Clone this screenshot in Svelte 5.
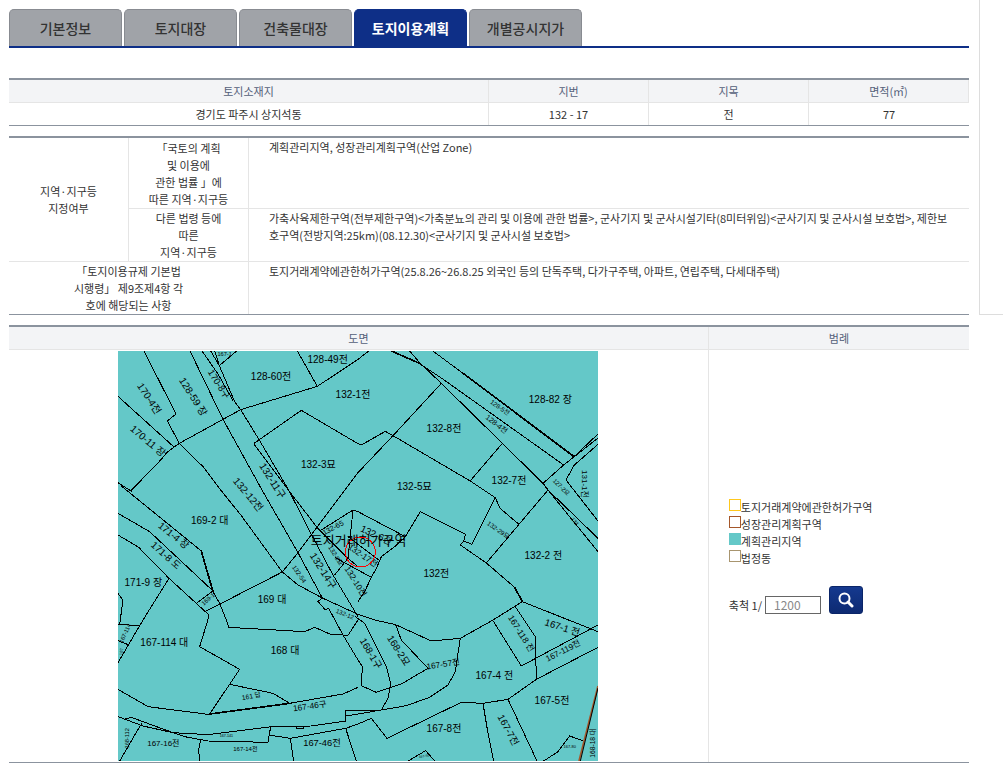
<script>
  const tabs = ['기본정보', '토지대장', '건축물대장', '토지이용계획', '개별공시지가'];
  let active = $state(3);
  let scale = $state('1200');

  const legend = [
    { kind: 'permit', label: '토지거래계약에관한허가구역' },
    { kind: 'growth', label: '성장관리계획구역' },
    { kind: 'managed', label: '계획관리지역' },
    { kind: 'district', label: '법정동' }
  ];

  // Parcel boundaries, three units to the screen pixel.
  const boundaries = [
    '78,3 174,192 148,213 184,280', '0,139 168,291', '0,398 42,425',
    '55,405 38,423 130,328 148,306 184,280 315,208 368,179 598,109 720,28 752,3',
    '184,280 255,350 308,420 370,497 493,666', '216,3 315,208 432,420 540,608 613,744',
    '252,3 300,72 345,152', '278,3 304,47 350,155 368,179', '290,3 304,47 356,3',
    '368,179 425,272 512,420 580,553 645,675 720,800', '538,3 598,109',
    '407,281 505,412 597,532 690,625 720,650',
    '407,281 550,181 720,281 732,284 802,244 825,257 1055,392 1132,443 1146,475 1203,523',
    '970,100 825,257 720,368 597,532 540,608 493,666 265,783',
    '820,3 900,38 970,84 1337,345', '875,3 905,38 970,100 1153,280 1275,400 1290,420',
    '945,3 1368,320 1440,252', '1275,400 1337,345 1440,264', '1440,283 1368,346 1344,390 1440,513',
    '1153,280 1057,392', '1132,443 1062,583 1037,573 1042,553 907,485 862,560',
    '862,560 830,590 790,620 785,632 775,655 760,682 740,725 720,755',
    '1037,573 1027,585 1105,639 1203,523 1290,420 1440,605', '1290,420 1440,565',
    '1105,639 1190,712 1213,755 1440,845',
    '1213,755 1125,810 1027,865 940,873 833,824 770,810 720,793 613,744 540,705 493,666',
    '1190,767 1252,860 1255,988', '1125,812 1210,948 1440,825',
    '1440,892 1255,988 1170,1048 1095,1060 1030,1057 807,1165 760,1105 720,1122 683,1135 517,1165 453,1155',
    '1095,1060 1110,1150 1127,1233', '1170,1048 1257,1233',
    '1027,865 1020,910 1012,965 990,1005 935,1042 865,1067 790,1080 720,1083',
    '833,824 850,870 930,955 850,1002 775,1027 730,1007 733,950 720,930 675,855 632,775 622,780 600,754 613,744',
    '712,800 740,820 750,840 805,950 818,1000 810,1045 790,1080 720,1092 683,1098',
    '10,408 250,603 285,725 305,760 325,810 332,832 560,845 590,832 635,852 690,856 720,810',
    '0,490 95,545 285,723 235,760', '0,555 62,592 153,685 273,795 268,815 245,890 365,958 275,1092',
    '153,685 75,810 0,938', '0,730 15,750 5,823', '0,823 65,827', '0,872 33,885',
    '0,1018 90,1070 270,1093 515,1060 675,1032 720,1012', '335,1003 465,1030 515,1060',
    '0,1100 75,1128 165,1148 270,1154 460,1130 580,1128 683,1113 683,1082 720,1082',
    '20,1107 40,1102 75,1115 165,1148 200,1160 270,1173 450,1177 458,1130',
    '683,1135 715,1233', '517,1165 527,1233', '248,1170 242,1200 245,1233', '72,1120 65,1130 5,1233',
    '535,1128 535,1135 557,1135 557,1128', '870,1233 923,1202 950,1233',
    '1277,1233 1320,1205 1355,1158 1395,1172', '610,540 705,480 720,485 862,560',
    '705,480 690,625', '690,625 650,675', '690,560 785,632', '650,622 760,682'
  ];
  const heavy = ['820,3 900,38', '1030,66 1368,320', '275,1092 515,1060', '1190,712 1213,755', '250,603 285,725'];

  // [text, centre x, centre y, angle, size]
  const labels = [
    ['128-49전', 629, 28, 0, 30], ['128-60전', 459, 78, 0, 30], ['132-1전', 705, 133, 0, 30],
    ['128-82 장', 1297, 149, 0, 30], ['132-8전', 978, 235, 0, 30], ['132-3묘', 601, 344, 0, 30],
    ['132-7전', 1173, 390, 0, 30], ['132-5묘', 889, 409, 0, 30], ['169-2 대', 275, 511, 0, 30],
    ['171-9 장', 76, 698, 0, 30], ['169 대', 462, 748, 0, 30], ['132전', 955, 670, 0, 30],
    ['132-2 전', 1276, 616, 0, 30], ['167-114 대', 139, 878, 0, 30], ['168 대', 501, 902, 0, 30],
    ['167-4 전', 1129, 975, 0, 30], ['167-5전', 1302, 1050, 0, 30], ['167-8전', 978, 1134, 0, 30],
    ['167-46전', 612, 1178, 0, 28], ['167-16전', 136, 1178, 0, 24], ['167-14전', 382, 1195, 0, 18],
    ['167-46구', 575, 1068, -8, 25], ['161 답', 400, 1038, -10, 20], ['167-57전', 975, 942, -9, 25],
    ['170-4전', 94, 145, 57, 30], ['128-59 장', 226, 140, 58, 30], ['170-8구', 303, 102, 58, 28],
    ['170-11 장', 90, 272, 40, 30], ['132-12전', 391, 433, 50, 30], ['132-11구', 464, 392, 58, 30],
    ['171-4 장', 167, 556, 39, 29], ['171-8 도', 144, 616, 42, 29], ['132-14구', 616, 662, 58, 30],
    ['132-54', 544, 672, 55, 19], ['132-8묘', 653, 616, 58, 19], ['132-65', 645, 533, -28, 22],
    ['132-6전', 775, 555, 25, 29], ['132-17전', 735, 616, 35, 25], ['132-10전', 713, 694, 58, 25],
    ['132-12', 681, 792, 22, 18], ['168-1구', 759, 910, 60, 29], ['168-2묘', 842, 901, 58, 29],
    ['128-5전', 1146, 172, 35, 19], ['128-4전', 1136, 222, 38, 22], ['131-1전', 1400, 402, 90, 24],
    ['127-2묘', 1330, 411, 45, 18], ['132-29묘', 1141, 540, 35, 19], ['132', 1371, 514, 50, 15],
    ['167-118 전', 1210, 850, 58, 26], ['167-1 전', 1333, 832, 18, 29], ['167-119전', 1335, 902, -27, 25],
    ['167-7전', 1171, 1140, 62, 29], ['169-1', 270, 747, -42, 18], ['167-114', 21, 850, -65, 17],
    ['168-112', 27, 1165, -90, 17], ['167-141', 325, 1157, 0, 11], ['167-50', 918, 1218, -8, 10],
    ['167-80', 1355, 1191, 0, 12], ['168-18 대', 1423, 1180, -90, 20], ['167-1', 320, 12, 0, 17],
    ['167', 10, 905, -82, 13]
  ];
</script>

<div class="page">
  <main>
    <nav aria-label="토지정보">
      {#each tabs as tab, i}
        <button type="button" class="tab" class:active={active === i} onclick={() => (active = i)}>{tab}</button>
      {/each}
    </nav>

    <table class="parcel">
      <colgroup><col class="half" /><col /><col /><col /></colgroup>
      <thead>
        <tr><th>토지소재지</th><th>지번</th><th>지목</th><th>면적(㎡)</th></tr>
      </thead>
      <tbody>
        <tr><td>경기도 파주시 상지석동</td><td>132 - 17</td><td>전</td><td>77</td></tr>
      </tbody>
    </table>

    <table class="zoning">
      <colgroup><col class="narrow" /><col class="narrow" /><col /></colgroup>
      <tbody>
        <tr>
          <th rowspan="2">지역·지구등<br />지정여부</th>
          <th>「국토의 계획<br />및 이용에<br />관한 법률 」에<br />따른 지역·지구등</th>
          <td>계획관리지역, 성장관리계획구역(산업 Zone)</td>
        </tr>
        <tr>
          <th>다른 법령 등에<br />따른<br />지역·지구등</th>
          <td>가축사육제한구역(전부제한구역)&lt;가축분뇨의 관리 및 이용에 관한 법률&gt;, 군사기지 및 군사시설기타(8미터위임)&lt;군사기지 및 군사시설 보호법&gt;, 제한보호구역(전방지역:25km)(08.12.30)&lt;군사기지 및 군사시설 보호법&gt;</td>
        </tr>
        <tr>
          <th colspan="2">「토지이용규제 기본법<br />시행령」 제9조제4항 각<br />호에 해당되는 사항</th>
          <td>토지거래계약에관한허가구역(25.8.26~26.8.25 외국인 등의 단독주택, 다가구주택, 아파트, 연립주택, 다세대주택)</td>
        </tr>
      </tbody>
    </table>

    <table class="plan">
      <colgroup><col /><col class="side" /></colgroup>
      <thead>
        <tr><th>도면</th><th>범례</th></tr>
      </thead>
      <tbody>
        <tr>
          <td class="drawing">
            <svg class="map" viewBox="0 3 1440 1230" role="img" aria-label="도면">
              <rect x="0" y="3" width="1440" height="1230" fill="#64c8c8" />
              <g fill="none" stroke="#000" stroke-width="3" shape-rendering="crispEdges">
                {#each boundaries as points}<polyline {points} />{/each}
              </g>
              <g fill="none" stroke="#000" stroke-width="5" shape-rendering="crispEdges">
                {#each heavy as points}<polyline {points} />{/each}
              </g>
              <polyline points="1440,1008 1383,1233" fill="none" stroke="#a5572a" stroke-width="5" />
              <polyline points="1440,1014 1387,1233" fill="none" stroke="#000" stroke-width="3" />
              {#each labels as [text, x, y, angle, size]}
                <text transform="translate({x} {y}) rotate({angle})" font-size={size} dy="0.36em">{text}</text>
              {/each}
              <circle cx="727" cy="606" r="45" fill="none" stroke="#f00" stroke-width="3" shape-rendering="crispEdges" />
              <text class="zone" x="722" y="584" font-size="39">토지거래허가구역</text>
            </svg>
          </td>
          <td class="key">
            <ul>
              {#each legend as item}
                <li><span class="swatch {item.kind}"></span>{item.label}</li>
              {/each}
            </ul>
            <form onsubmit={(e) => e.preventDefault()}>
              <label for="scale">축척 1/</label>
              <input id="scale" type="text" bind:value={scale} />
              <button type="submit" aria-label="검색">
                <svg width="16" height="16" viewBox="0 0 16 16" fill="none" stroke="#fff">
                  <circle cx="6.5" cy="6.5" r="5" stroke-width="2" />
                  <path d="M10 10l4 4" stroke-width="3" stroke-linecap="round" />
                </svg>
              </button>
            </form>
          </td>
        </tr>
      </tbody>
    </table>
  </main>
  <aside></aside>
</div>

<style>
  :global(body) { background: #fff; }
  .page {
    display: grid;
    grid-template-columns: minmax(0, 1fr) 24px;
    column-gap: 10px;
    padding-left: 9px;
    font: 11px/17px "Noto Sans CJK KR", sans-serif;
    color: #333;
  }
  aside {
    box-sizing: border-box;
    height: 315px;
    border: solid #ddd;
    border-width: 0 0 1px 1px;
  }
  nav {
    display: flex;
    gap: 2px;
    margin: 9px 0 30px;
    border-bottom: 2px solid #0e2f87;
  }
  .tab {
    width: 113px;
    height: 37px;
    padding: 0 0 1px;
    border: 1px solid #888b91;
    border-bottom: 0;
    border-radius: 5px 5px 0 0;
    background: #a0a3a8;
    color: #333;
    font: 500 14px/20px "Noto Sans CJK KR", sans-serif;
    cursor: pointer;
  }
  .tab.active {
    border-color: #0e2f87;
    background: #0e2f87;
    color: #fff;
    font-weight: 700;
  }
  table {
    width: 100%;
    margin-bottom: 10px;
    table-layout: fixed;
    border-spacing: 0;
    border-top: 2px solid #8b939e;
    border-bottom: 1px solid #8b939e;
  }
  th, td { padding: 0; font-weight: 400; text-align: center; }
  .zoning th, .parcel th, .parcel td:not(:last-child), .plan :is(th, td):not(:last-child) {
    border-right: 1px solid #e5e5e5;
  }
  thead th {
    height: 22px;
    border-bottom: 1px solid #e5e5e5;
    background: #f3f4f6;
    color: #536079;
  }
  .half { width: 50%; }
  .narrow { width: 12.5%; }
  .side { width: 27.1%; }
  .parcel td { height: 22px; }
  .zoning th { padding: 1px 0 0; }
  .zoning tr:first-child > th + th { padding-top: 2px; }
  .zoning tr + tr > * { border-top: 1px solid #e5e5e5; }
  .zoning td {
    padding: 1px 12px 0 20px;
    text-align: left;
    vertical-align: top;
    word-break: break-all;
  }
  .drawing { padding: 1px 0; }
  .map { display: block; width: 69%; max-width: 480px; margin: 0 auto; }
  .map text {
    font-family: "Liberation Sans", "Noto Sans CJK KR", sans-serif;
    text-anchor: middle;
    fill: #000;
  }
  .map .zone { font-family: "Noto Sans CJK KR", sans-serif; }
  .key { padding: 0 0 0 20px; text-align: left; }
  ul { margin: 0 0 19px; padding: 0; list-style: none; }
  li { display: flex; }
  .swatch { box-sizing: border-box; width: 12px; height: 12px; border: 1px solid; }
  .permit { border-color: #ffc81e; }
  .growth { border-color: #a5572a; }
  .managed { border-color: #64c8c8; background: #64c8c8; }
  .district { border-color: #a8956f; }
  form { display: flex; align-items: flex-end; }
  input {
    box-sizing: border-box;
    width: 56px;
    height: 18px;
    margin: 0 8px 0 3px;
    padding: 0 8px;
    border: 1px solid #666;
    background: #fff;
    color: #888;
    font: 12px/16px "Noto Sans CJK KR", sans-serif;
  }
  form button {
    display: grid;
    place-items: center;
    width: 34px;
    height: 28px;
    padding: 0;
    border: 1px solid #0a2568;
    border-radius: 3px;
    background: linear-gradient(#15398f, #0d2a72);
    cursor: pointer;
  }
</style>
